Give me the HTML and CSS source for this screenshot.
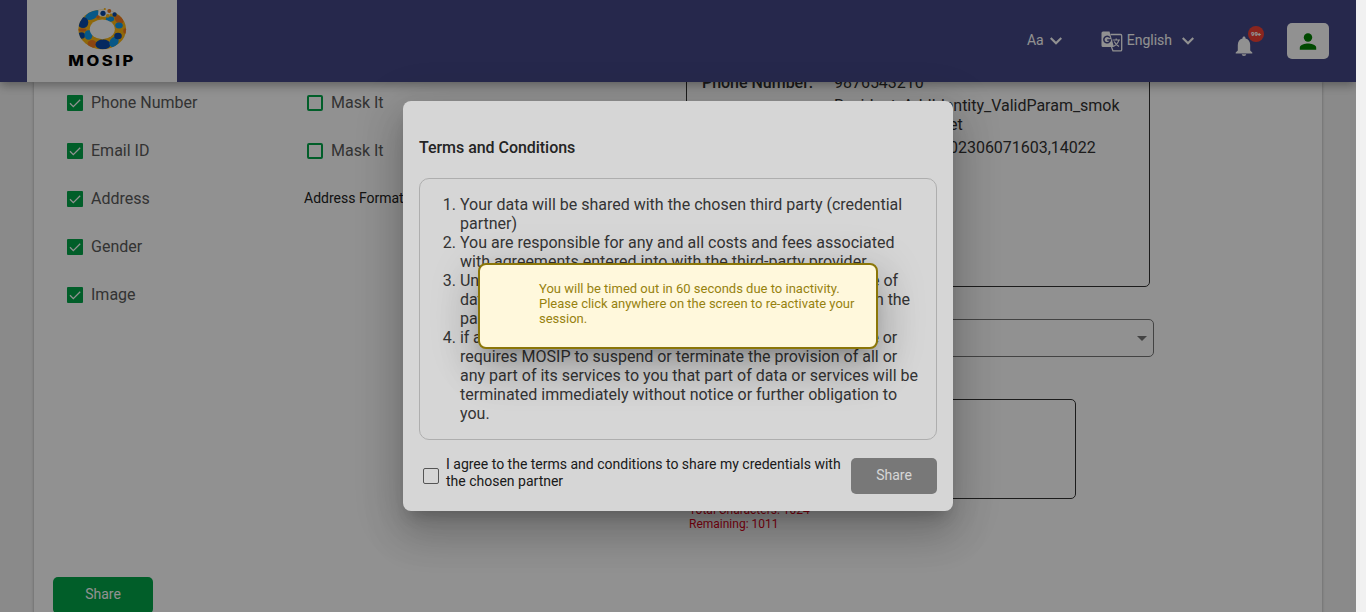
FILE: index.html
```
<!DOCTYPE html>
<html lang="en">
<head>
<meta charset="utf-8">
<title>MOSIP Resident Portal</title>
<link rel="stylesheet" href="styles.css">
</head>
<body>
<div class="page">
  <header class="topbar">
    <div class="brand">
      <svg width="150" height="82" viewBox="27 0 150 82">
        <defs>
          <clipPath id="ring"><ellipse cx="102.200" cy="29.300" rx="23.900" ry="19.900"/></clipPath>
        </defs>
        <g clip-path="url(#ring)">
          <rect x="77" y="8" width="50" height="42" fill="#fcb813"/>
          <ellipse cx="92.500" cy="15" rx="7.800" ry="4" transform="rotate(-25 92.500 15)" fill="#0f9bee"/>
          <ellipse cx="83" cy="22.500" rx="5.300" ry="5.500" fill="#0a4ba8"/>
          <ellipse cx="82.500" cy="30" rx="4" ry="1.700" fill="#f47b20"/>
          <ellipse cx="81.500" cy="35.500" rx="3.500" ry="3.200" fill="#0a4ba8"/>
          <ellipse cx="88.500" cy="35" rx="4" ry="4.800" fill="#0f9bee"/>
          <ellipse cx="92" cy="44" rx="4.500" ry="4" fill="#f47b20"/>
          <ellipse cx="103" cy="44.500" rx="7.500" ry="5" fill="#0a4ba8"/>
          <ellipse cx="114" cy="42" rx="4.200" ry="5.500" transform="rotate(35 114 42)" fill="#0f9bee"/>
          <ellipse cx="118" cy="36" rx="3.800" ry="3.200" fill="#0a4ba8"/>
          <ellipse cx="125" cy="31" rx="1.800" ry="2.800" fill="#f47b20"/>
          <ellipse cx="119" cy="19.500" rx="5" ry="3.500" transform="rotate(40 119 19.500)" fill="#f47b20"/>
          <ellipse cx="119" cy="25.500" rx="3.800" ry="3" fill="#0f9bee"/>
          <ellipse cx="110" cy="19" rx="4.200" ry="2.800" fill="#0f9bee"/>
          <ellipse cx="102.300" cy="29.300" rx="12.500" ry="9.900" fill="#fff"/>
          <path d="M98 15.500l.8-9h20l-5.800 8.500-3.500 1-5 .8-5-.5z" fill="#fff"/>
        </g>
        <circle cx="103" cy="13.300" r="2.600" fill="#0a4ba8"/>
        <circle cx="98" cy="17" r="1.800" fill="#f47b20"/>
        <circle cx="107.800" cy="15.800" r="1.900" fill="#fcb813"/>
        <circle cx="109.300" cy="11" r="2" fill="#f47b20"/>
        <circle cx="104.800" cy="9" r="1.100" fill="#fcb813"/>
        <circle cx="114.500" cy="14.500" r="2.200" fill="#0a4ba8"/>
        <circle cx="111" cy="15" r="1.400" fill="#fcb813"/>
        <text class="brand-name" transform="translate(68.300 66.300) scale(1.180 1)">MOSIP</text>
      </svg>
    </div>
    <nav class="tools">
      <div class="tool font-tool"><span class="tool-text">Aa</span>
        <svg class="chev" width="12" height="8" viewBox="0 0 12 8"><path d="M.7 1l5.300 5.300L11.300 1"/></svg>
      </div>
      <div class="tool lang-tool">
        <svg width="22" height="21" viewBox="0 0 22 21">
          <path d="M2 .5h6.500l4.500 15.500H2A1.500 1.500 0 0 1 .5 14.500V2A1.500 1.500 0 0 1 2 .5z" fill="#fff"/>
          <path d="M9.500 3.500h10a1.200 1.200 0 0 1 1.200 1.200v14a1.200 1.200 0 0 1-1.200 1.200h-7.500l-1.500-4" fill="none" stroke="#fff" stroke-width="1.300"/>
          <path d="M8.800 6.600A3.300 3.300 0 1 0 9.400 9H6.200" fill="none" stroke="#444887" stroke-width="1.500"/>
          <path d="M11.500 9h7.500M15.200 7.500V9M17.800 9c-.5 2.500-2.500 4.800-5 6.300M13.200 10.500c1 2 2.700 3.800 4.800 5" fill="none" stroke="#fff" stroke-width="1.200"/>
        </svg>
        <span class="lang-name tool-text">English</span>
        <svg class="chev" width="12" height="8" viewBox="0 0 12 8"><path d="M.7 1l5.300 5.300L11.300 1"/></svg>
      </div>
      <div class="bell">
        <svg width="18" height="20" viewBox="0 0 18 20"><path fill="#fff" d="M9 20c1.200 0 2.200-.8 2.200-1.700H6.800C6.800 19.200 7.800 20 9 20zM15.200 14.500V9c0-3.100-1.700-5.700-4.700-6.400V2C10.500 1.100 9.800.5 9 .5S7.500 1.100 7.500 2v.6C4.500 3.300 2.800 5.900 2.800 9v5.500L.7 16.600v1h16.600v-1z"/></svg>
        <span class="count">99+</span>
      </div>
      <div class="profile">
        <svg width="18" height="18" viewBox="0 0 18 18" fill="#008000"><circle cx="9" cy="5.500" r="4.200"/><path d="M.8 17.700v-2c0-2.800 5.500-4.100 8.200-4.100s8.200 1.300 8.200 4.100v2z"/></svg>
      </div>
    </nav>
  </header>
  <main class="content">
    <section class="card">
      <div class="left">
        <div class="row"><span class="attr"><svg class="box" viewBox="0 0 16 16"><rect width="16" height="16" rx="1" /><path d="M3 8.300l3.300 3.300L13.200 4.700"/></svg><span class="label">Phone Number</span></span><span class="mask"><i class="empty"></i><span class="label">Mask It</span></span></div>
        <div class="row"><span class="attr"><svg class="box" viewBox="0 0 16 16"><rect width="16" height="16" rx="1" /><path d="M3 8.300l3.300 3.300L13.200 4.700"/></svg><span class="label">Email ID</span></span><span class="mask"><i class="empty"></i><span class="label">Mask It</span></span></div>
        <div class="row"><span class="attr"><svg class="box" viewBox="0 0 16 16"><rect width="16" height="16" rx="1" /><path d="M3 8.300l3.300 3.300L13.200 4.700"/></svg><span class="label">Address</span></span><span class="format label">Address Format</span></div>
        <div class="row"><span class="attr"><svg class="box" viewBox="0 0 16 16"><rect width="16" height="16" rx="1" /><path d="M3 8.300l3.300 3.300L13.200 4.700"/></svg><span class="label">Gender</span></span></div>
        <div class="row"><span class="attr"><svg class="box" viewBox="0 0 16 16"><rect width="16" height="16" rx="1" /><path d="M3 8.300l3.300 3.300L13.200 4.700"/></svg><span class="label">Image</span></span></div>
        <button class="btn share-main">Share</button>
      </div>
      <div class="right">
        <div class="preview">
          <b>Phone Number:</b><span>9876543210</span>
          <b></b><span>Resident_AddIdentity_ValidParam_smok<br><em class="tail"></em>et</span>
          <b></b><span><em class="tail"></em>02306071603,14022</span>
        </div>
        <div class="select"><i class="arrow"></i></div>
        <div class="textarea"></div>
        <div class="hint">Total Characters: 1024<br>Remaining: 1011</div>
      </div>
    </section>
  </main>
  <div class="overlay dim">
    <div class="dialog">
      <h2 class="title">Terms and Conditions</h2>
      <ol class="terms">
        <li>Your data will be shared with the chosen third party (credential<br>partner)</li>
        <li>You are responsible for any and all costs and fees associated<br>with agreements entered into with the third-party provider.</li>
        <li><p>Under no circumstances will MOSIP be liable for the misuse of</p><p class="wide">data shared by you or for any loss that may result from or on the</p>partner</li>
        <li><p class="or">if a change in any applicable law relating to the given service or</p>requires MOSIP to suspend or terminate the provision of all or<br>any part of its services to you that part of data or services will be<br>terminated immediately without notice or further obligation to<br>you.</li>
      </ol>
      <div class="agree">
        <i class="check"></i>
        <p class="agree-text">I agree to the terms and conditions to share my credentials with<br>the chosen partner</p>
        <button class="btn share-off">Share</button>
      </div>
    </div>
  </div>
  <div class="overlay dim-light">
    <div class="toast">You will be timed out in 60 seconds due to inactivity.<br>Please click anywhere on the screen to re-activate your<br>session.</div>
  </div>
</div>
</body>
</html>
```
FILE: styles.css
```
* { box-sizing: border-box; }
body { margin: 0; height: 612px; overflow: hidden; background: #f1f1f1; font-family: Roboto, "Liberation Sans", sans-serif; }
.page { position: relative; width: 1356px; height: 612px; overflow: hidden; background: #f4f4f4; display: flex; flex-direction: column; }
.topbar { position: relative; z-index: 1; flex: none; height: 82px; background: #444887; display: flex; justify-content: space-between; padding-left: 27px; box-shadow: 0 3px 10px rgba(0,0,0,.36); }
.brand { width: 150px; height: 82px; background: #fff; }
.brand svg { display: block; }
.brand-name { font: 800 14px Inter, sans-serif; fill: #000; letter-spacing: 2.2px; }
.tools { display: flex; align-items: center; height: 82px; padding-right: 27px; color: #fff; font-size: 14px; }
.tool { display: flex; align-items: center; }
.tool-text { padding-bottom: 2px; }
.font-tool { gap: 6px; margin-right: 39px; }
.lang-name { margin: 0 10px 0 4px; }
.chev { fill: none; stroke: #fff; stroke-width: 2.2; }
.bell { position: relative; margin: 10px 34px 0 41px; width: 18px; height: 20px; }
.count { position: absolute; left: 13px; top: -10px; width: 16px; height: 16px; border-radius: 50%; background: #f44336; font-size: 6px; font-weight: 900; line-height: 16px; text-align: center; }
.profile { width: 42px; height: 36px; border-radius: 5px; background: #fff; display: flex; align-items: center; justify-content: center; }
.content { flex: 1; min-height: 0; padding: 0 33px 0 34px; overflow: hidden; }
.card { width: 1288px; height: 560px; background: #fff; box-shadow: 0 0 3px rgba(0,0,0,.3); display: grid; grid-template-columns: 652px 1fr; }
.left { margin-top: -3px; }
.row { height: 48px; display: flex; align-items: center; padding-left: 33px; font-size: 16px; color: #5a5a5a; }
.attr { width: 240px; display: flex; align-items: center; gap: 8px; }
.label { padding-bottom: 2px; }
.box { width: 16px; height: 16px; fill: #03a64a; }
.box path { fill: none; stroke: #fff; stroke-width: 1.3; }
.mask { display: flex; align-items: center; gap: 8px; }
.empty { width: 16px; height: 16px; border: 2px solid #03a64a; border-radius: 2px; }
.format { font-size: 14px; color: #222; margin-left: -3px; }
.btn { border: 0; padding: 0 0 2px; font: 14px Roboto, sans-serif; color: #fff; border-radius: 5px; }
.share-main { display: block; width: 100px; height: 37px; margin: 258px 0 0 19px; padding-bottom: 4px; background: #03a64a; }
.preview { width: 464px; height: 245px; margin-top: -40px; border: 1px solid #333; border-radius: 5px; padding: 30px 0 0 15px; display: grid; grid-template-columns: 132px 1fr; grid-auto-rows: max-content; row-gap: 4px; font-size: 16px; line-height: 19px; color: #333; letter-spacing: -.02px; }
.preview b { font-weight: 500; }
.tail { display: inline-block; width: 115px; }
.select { width: 468px; height: 38px; margin-top: 32px; border: 1px solid #777; border-radius: 5px; display: flex; align-items: center; justify-content: flex-end; padding-right: 6px; }
.arrow { border: 5px solid transparent; border-top-color: #777; border-bottom: 0; }
.textarea { width: 390px; height: 100px; margin-top: 42px; border: 1px solid #333; border-radius: 5px; }
.hint { margin: 4px 0 0 3px; font-size: 12px; line-height: 14px; color: #e0051c; }
.overlay { position: absolute; inset: 0; z-index: 2; display: flex; align-items: center; justify-content: center; }
.dim { background: rgba(0,0,0,.32); }
.dim-light { z-index: 3; background: rgba(0,0,0,.16); }
.dialog { width: 550px; height: 410px; padding: 0 16px; border-radius: 8px; background: #fff; box-shadow: 0 11px 15px -7px rgba(0,0,0,.2), 0 24px 38px 3px rgba(0,0,0,.14), 0 9px 46px 8px rgba(0,0,0,.12); }
.title { margin: 37px 0 21px; font-size: 16px; line-height: 19px; font-weight: 500; color: #2c2c2c; letter-spacing: -.04px; }
.terms { height: 262px; margin: 0; padding: 16px 0 0 40px; border: 1px solid #d0d0d0; border-radius: 10px; font-size: 16px; line-height: 19px; color: #404040; white-space: nowrap; }
.terms p { margin: 0; width: 438px; text-align-last: justify; letter-spacing: -.07px; }
.terms .wide { width: 450px; }
.terms .or { width: 437px; letter-spacing: -.16px; }
.agree { display: flex; align-items: flex-start; padding-top: 15px; }
.check { width: 16px; height: 16px; margin: 13px 7px 0 4px; border: 1px solid #666; border-radius: 2px; }
.agree-text { margin: 1px 0 0; width: 405px; font-size: 14px; line-height: 17px; color: #222; white-space: nowrap; }
.share-off { width: 86px; height: 36px; margin-top: 3px; background: #909090; }
.toast { width: 400px; height: 86px; padding: 16px 0 0 59px; border: 2px solid #8b7608; border-radius: 8px; background: #fff8dc; color: #97820f; font-size: 13px; line-height: 15px; white-space: nowrap; box-shadow: 0 11px 15px -7px rgba(0,0,0,.2), 0 24px 38px 3px rgba(0,0,0,.14), 0 9px 46px 8px rgba(0,0,0,.12); }
```
